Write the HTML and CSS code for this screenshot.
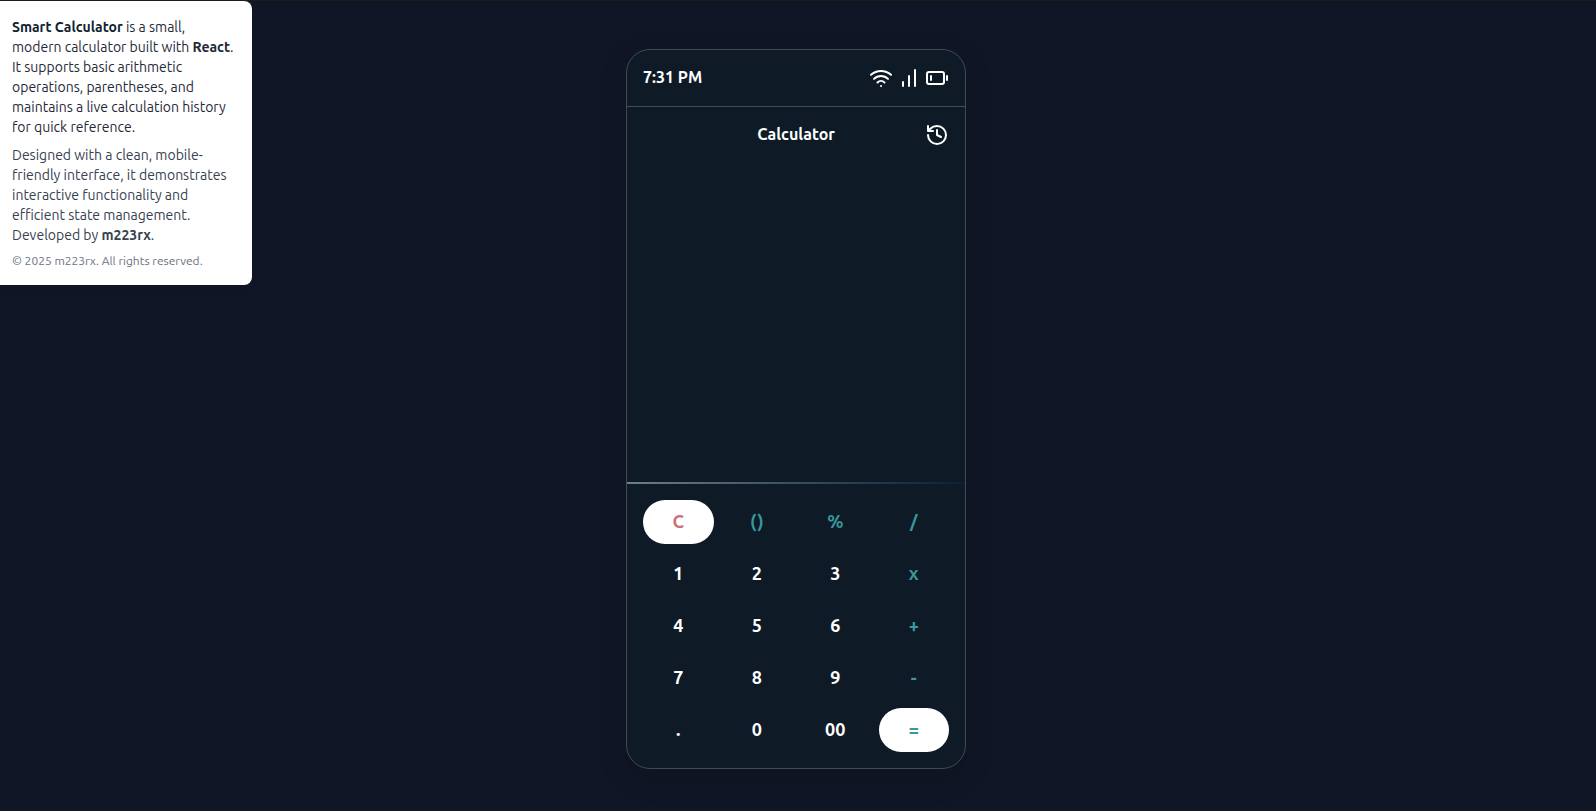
FILE: index.html
```html
<!DOCTYPE html>
<html lang="en">
<head>
<meta charset="utf-8">
<title>Smart Calculator</title>
<link rel="stylesheet" href="styles.css">
</head>
<body>
<div class="page">
  <aside class="about">
    <p class="intro"><b class="name">Smart Calculator</b> is a small, modern calculator built with <b>React</b>. It supports basic arithmetic operations, parentheses, and maintains a live calculation history for quick reference.</p>
    <p class="detail">Designed with a clean, mobile-friendly interface, it demonstrates interactive functionality and efficient state management. Developed by <b>m223rx</b>.</p>
    <p class="copyright">© 2025 m223rx. All rights reserved.</p>
  </aside>
  <main class="phone">
    <header class="status">
      <span class="time">7:31 PM</span>
      <div class="status-icons">
        <svg width="24" height="24" viewBox="0 0 24 24"><path d="M2 8.820a15 15 0 0 1 20 0M5 12.859a10 10 0 0 1 14 0M8.500 16.429a5 5 0 0 1 7 0M12 20h.01"/></svg>
        <svg width="24" height="24" viewBox="0 0 24 24"><path d="M6 20v-4M12 20V10M18 20V4"/></svg>
        <svg width="24" height="24" viewBox="0 0 24 24"><rect x="2" y="6" width="17" height="12" rx="2"/><path d="M6 10v4M22 10v4"/></svg>
      </div>
    </header>
    <section class="display">
      <h1 class="title">Calculator</h1>
      <svg class="history" width="24" height="24" viewBox="0 0 24 24"><path d="M3 12a9 9 0 1 0 9-9 9.750 9.750 0 0 0-6.740 2.740L3 8M3 3v5h5M12 7v5l4 2"/></svg>
    </section>
    <div class="divider"></div>
    <section class="keys">
      <button class="key clear">C</button><button class="key op">()</button><button class="key op">%</button><button class="key op">/</button>
      <button class="key">1</button><button class="key">2</button><button class="key">3</button><button class="key op">x</button>
      <button class="key">4</button><button class="key">5</button><button class="key">6</button><button class="key op">+</button>
      <button class="key">7</button><button class="key">8</button><button class="key">9</button><button class="key op">-</button>
      <button class="key">.</button><button class="key">0</button><button class="key">00</button><button class="key equals">=</button>
    </section>
  </main>
</div>
</body>
</html>
```
FILE: styles.css
```css
* { box-sizing: border-box; margin: 0; }
body { background: #101625; font-family: Ubuntu, "Noto Sans", sans-serif; }
.page { height: 811px; border-top: 1px solid #1c1c1c; display: grid; grid-template-columns: 252px 340px; column-gap: 374px; align-items: start; overflow: hidden; }
.about { width: 252px; padding: 16px 16px 16px 12px; background: #fff; border-radius: 0 8px 8px 0; font-size: 14px; line-height: 20px; color: #1f2937; box-shadow: 0 4px 6px -1px rgba(0,0,0,.1); }
.about b { font-weight: 600; }
.about .name { color: #0f2231; }
.detail { margin-top: 8px; color: #374151; }
.copyright { margin-top: 8px; font-size: 12px; line-height: 16px; color: #6b7280; }
.phone { width: 340px; height: 720px; margin-top: 48px; border: 1px solid #414957; border-radius: 24px; background: #0f1a27; color: #fff; display: flex; flex-direction: column; box-shadow: 0 10px 30px rgba(0,0,0,.12); }
.status { height: 57px; padding: 0 16px; border-bottom: 1px solid #454c59; display: flex; align-items: center; justify-content: space-between; }
.time { font-size: 16px; line-height: 24px; font-weight: 600; padding-bottom: 2px; }
.status-icons { display: flex; gap: 4px; }
svg { fill: none; stroke: #fff; stroke-width: 2; stroke-linecap: round; stroke-linejoin: round; display: block; }
.display { flex: 1; display: grid; grid-template-columns: 24px 1fr 24px; grid-template-rows: 24px; padding: 16px; align-items: center; }
.title { grid-column: 2; font-size: 16px; line-height: 22px; font-weight: 600; text-align: center; padding-bottom: 2px; }
.divider { height: 2px; background: linear-gradient(90deg, #6b7f86, #0a2035); }
.keys { display: grid; grid-template-columns: repeat(4, 1fr); gap: 8px; padding: 16px; }
.key { height: 44px; border: 0; border-radius: 22px; padding: 0 0 2px; background: transparent; color: #fff; font: 600 18px/28px Ubuntu, "Noto Sans", sans-serif; }
.op { color: #38989c; }
.clear { background: #fff; color: #cd6f76; }
.equals { background: #fff; color: #38989c; }
```
